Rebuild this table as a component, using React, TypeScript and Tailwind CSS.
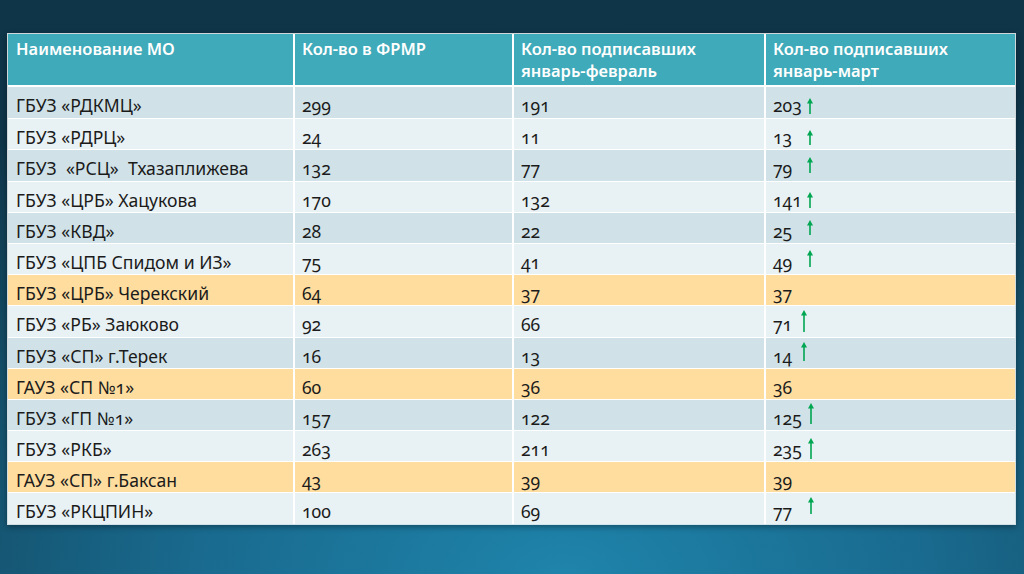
const rows: { name: string; frmr: string; feb: string; mar: string; tone?: "orange"; arrow?: [number, number, number] }[] = [
  { name: "ГБУЗ «РДКМЦ»", frmr: "299", feb: "191", mar: "203", arrow: [40, 11, 16] },
  { name: "ГБУЗ «РДРЦ»", frmr: "24", feb: "11", mar: "13", arrow: [40, 11, 15] },
  { name: "ГБУЗ  «РСЦ»  Тхазаплижева", frmr: "132", feb: "77", mar: "79", arrow: [40, 7, 16] },
  { name: "ГБУЗ «ЦРБ» Хацукова", frmr: "170", feb: "132", mar: "141", arrow: [40, 10, 16] },
  { name: "ГБУЗ «КВД»", frmr: "28", feb: "22", mar: "25", arrow: [40, 7, 15] },
  { name: "ГБУЗ «ЦПБ Спидом и ИЗ»", frmr: "75", feb: "41", mar: "49", arrow: [40, 6, 17] },
  { name: "ГБУЗ «ЦРБ» Черекский", frmr: "64", feb: "37", mar: "37", tone: "orange" },
  { name: "ГБУЗ «РБ» Заюково", frmr: "92", feb: "66", mar: "71", arrow: [34, 4, 22] },
  { name: "ГБУЗ «СП» г.Терек", frmr: "16", feb: "13", mar: "14", arrow: [34, 4, 19] },
  { name: "ГАУЗ «СП №1»", frmr: "60", feb: "36", mar: "36", tone: "orange" },
  { name: "ГБУЗ «ГП №1»", frmr: "157", feb: "122", mar: "125", arrow: [41, 3, 21] },
  { name: "ГБУЗ «РКБ»", frmr: "263", feb: "211", mar: "235", arrow: [41, 7, 21] },
  { name: "ГАУЗ «СП» г.Баксан", frmr: "43", feb: "39", mar: "39", tone: "orange" },
  { name: "ГБУЗ «РКЦПИН»", frmr: "100", feb: "69", mar: "77", arrow: [41, 4, 17] },
];

function UpArrow({ h }: { h: number }) {
  return (
    <svg width="8" height={h} viewBox={`0 0 8 ${h}`} className="block">
      <line x1="4" y1="4" x2="4" y2={h} stroke="#00a651" strokeWidth="1.6" />
      <polygon points="4,0 7,5.5 1,5.5" fill="#00a651" />
    </svg>
  );
}

function rowBg(i: number, tone?: string) {
  if (tone === "orange") return "bg-[#fedd9f]";
  return i % 2 === 0 ? "bg-[#d0e2e8]" : "bg-[#e8f1f4]";
}

export default function App() {
  return (
    <div
      className="h-[574px] w-full overflow-hidden bg-[radial-gradient(ellipse_90%_95%_at_55%_100%,#1f84ab_0%,#196a8e_40%,#134a63_75%,#0f3549_100%)] pl-[7px] pt-[33px]"
      style={{ fontFamily: '"Noto Sans", "Open Sans", sans-serif' }}
    >
      <div className="w-[1009px] border border-white/80 shadow-[0_2px_6px_rgba(0,0,0,0.35)]">
        <div className="grid h-[53px] grid-cols-[285px_219px_252px_251px] border-b-2 border-white bg-[#3faab9] text-[16.5px] font-semibold leading-[22px] text-white">
          <div className="pl-[8px] pt-[4px]">Наименование МО</div>
          <div className="border-l-2 border-white pl-[7px] pt-[4px]">Кол-во в ФРМР</div>
          <div className="border-l-2 border-white pl-[7px] pt-[4px]">
            Кол-во подписавших
            <br />
            январь-февраль
          </div>
          <div className="border-l-2 border-white pl-[7px] pt-[4px]">
            Кол-во подписавших
            <br />
            январь-март
          </div>
        </div>
        {rows.map((r, i) => (
          <div
            key={i}
            className={`grid h-[31.2px] grid-cols-[285px_219px_252px_251px] text-[17.6px] leading-6 text-[#1b1b1b] oldstyle-nums ${rowBg(i, r.tone)} ${
              i > 0 ? "border-t border-white" : ""
            }`}
          >
            <div className="whitespace-pre pl-[8px] pt-[6px]">{r.name}</div>
            <div className="border-l-2 border-white pl-[7px] pt-[6px]">{r.frmr}</div>
            <div className="border-l-2 border-white pl-[7px] pt-[6px]">{r.feb}</div>
            <div className="relative border-l-2 border-white pl-[7px] pt-[6px]">
              {r.mar}
              {r.arrow && (
                <div className="absolute" style={{ left: r.arrow[0], top: r.arrow[1] }}>
                  <UpArrow h={r.arrow[2]} />
                </div>
              )}
            </div>
          </div>
        ))}
      </div>
    </div>
  );
}
